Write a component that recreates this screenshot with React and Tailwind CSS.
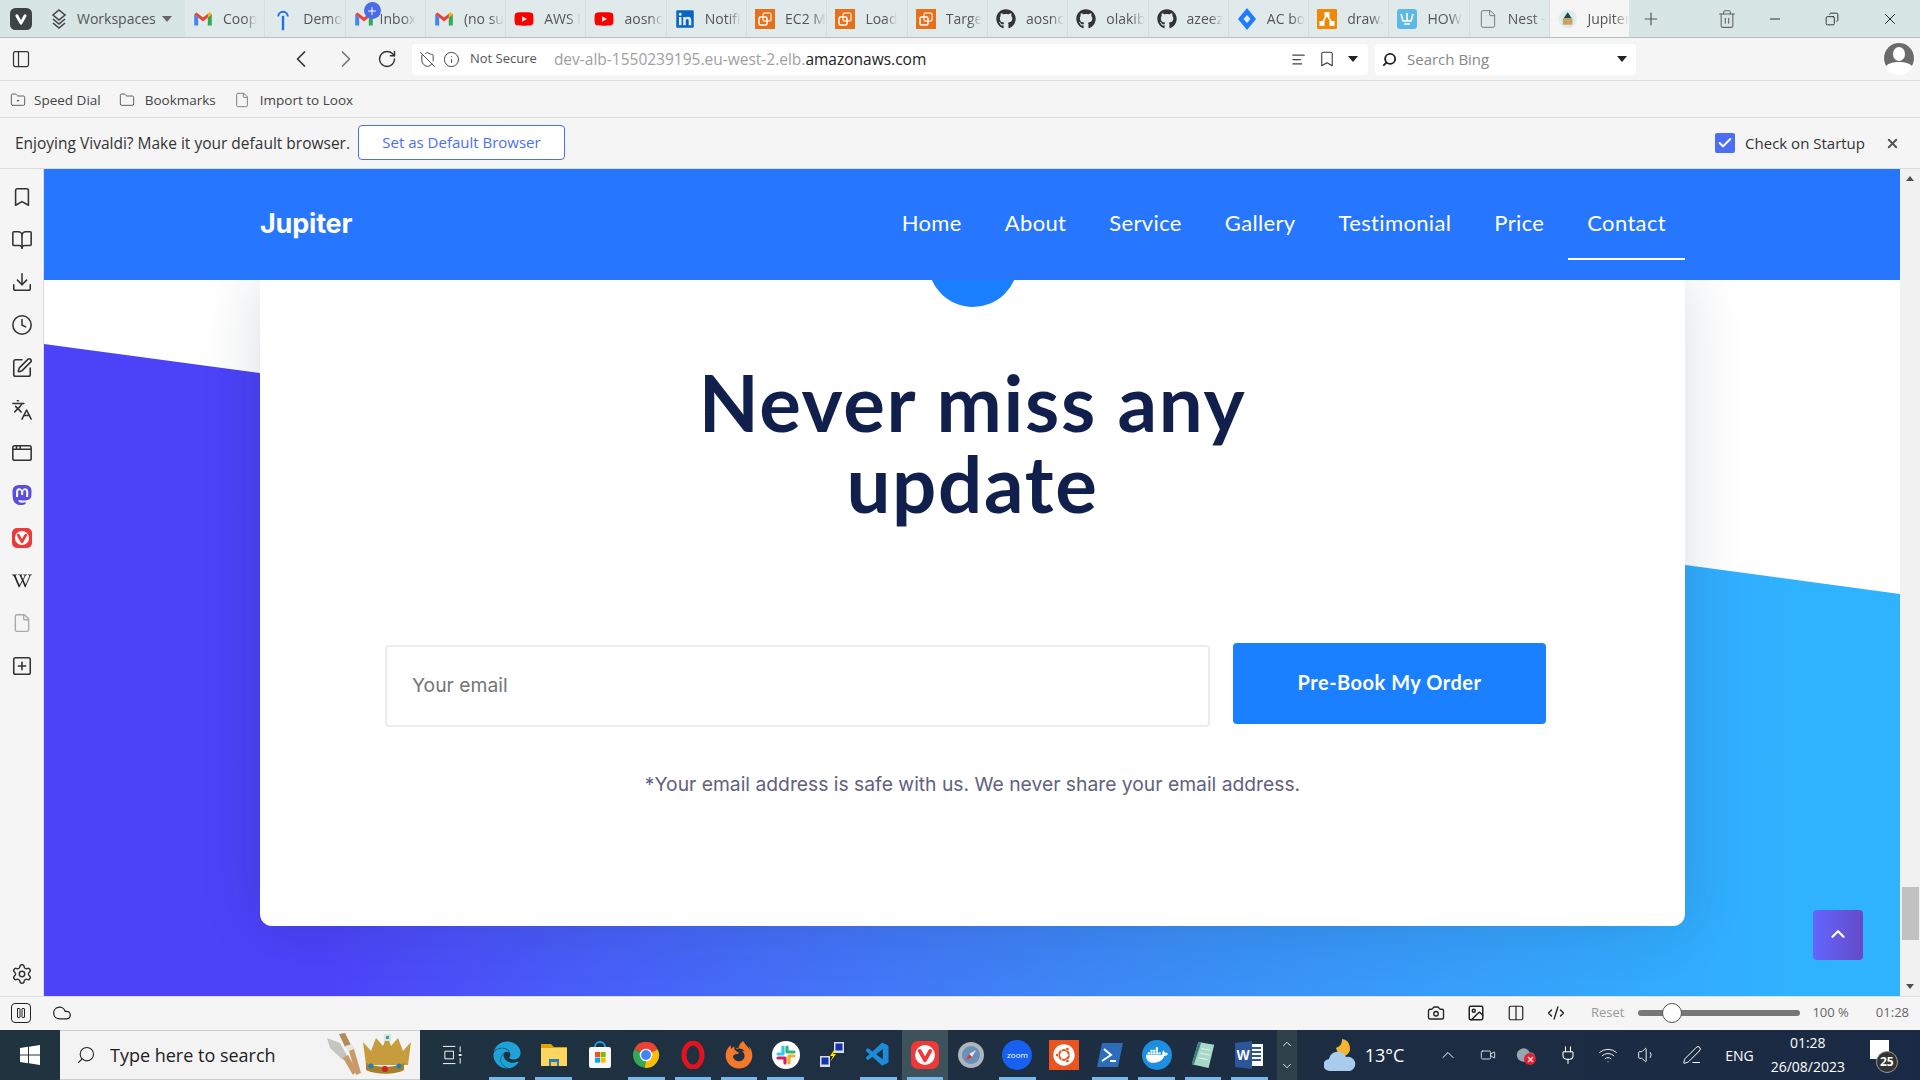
import React from 'react';
import {
  Bookmark, BookOpen, Download, Clock, SquarePen, Languages, AppWindow, File, SquarePlus, Settings,
  PanelLeft, ChevronLeft, ChevronRight, RotateCw, ShieldOff, Info, AlignLeft, Plus, Trash2, Minus, X, Copy,
  Search, FolderDot, Folder, Check, ChevronUp, ChevronDown, Pause, Cloud, Camera, Image, Columns2, Code2, Video, Wifi, Volume1, PenLine, Plug,
} from 'lucide-react';
import { FaGithub, FaLinkedin, FaYoutube, FaFirefoxBrowser, FaEdge, FaUbuntu, FaDocker, FaWikipediaW } from 'react-icons/fa';
import { SiMastodon } from 'react-icons/si';
import { VscVscode } from 'react-icons/vsc';

const Gmail = () => (
  <svg viewBox="0 0 24 20" className="w-5 h-4">
    <path d="M1 4v14h5V8z" fill="#4285f4" />
    <path d="M23 4v14h-5V8z" fill="#34a853" />
    <path d="M1 4l5 4 6 5 6-5 5-4-3-2-8 6-8-6z" fill="#ea4335" />
    <path d="M18 8l5-4-3-2-2 1.5z" fill="#fbbc04" />
  </svg>
);
const Youtube = () => <FaYoutube className="w-5 h-5 text-[#f00]" />;
const Fing = () => (
  <svg viewBox="0 0 20 30" className="w-5 h-6" fill="none" stroke="#1a73e8" strokeWidth="2.4">
    <path d="M4 12a6 6 0 1 1 12 0" />
    <path d="M10 11v18" strokeWidth="3" />
  </svg>
);
const Aws = () => (
  <svg viewBox="0 0 20 20" className="w-5 h-5">
    <rect width="20" height="20" fill="#e8701a" />
    <rect x="8" y="4" width="8" height="8" rx="1.5" fill="none" stroke="#fbd9bd" strokeWidth="1.5" />
    <rect x="4" y="8" width="8" height="8" rx="1.5" fill="none" stroke="#fff" strokeWidth="1.5" />
  </svg>
);
const Jira = () => (
  <svg viewBox="0 0 20 24" className="w-5 h-6">
    <path d="M10 1l9 11-9 11-9-11z" fill="#1f7bff" />
    <path d="M10 8l3.5 4-3.5 4-3.5-4z" fill="#e3ebeb" />
  </svg>
);
const Draw = () => (
  <svg viewBox="0 0 20 20" className="w-5 h-5">
    <rect width="20" height="20" rx="1" fill="#f08705" />
    <path d="M10 6l-5 8M10 6l5 8" stroke="#fff" strokeWidth="1.5" />
    <rect x="7.5" y="3" width="5" height="5" fill="#fff" />
    <rect x="2.5" y="12" width="5" height="5" fill="#fff" />
    <rect x="12.5" y="12" width="5" height="5" fill="#fff" />
  </svg>
);
const How = () => (
  <svg viewBox="0 0 20 20" className="w-5 h-5">
    <rect width="20" height="20" rx="3" fill="#5cb8e6" />
    <path d="M4 5l2 7h8l2-7M10 4v8M7 15h6" stroke="#fff" strokeWidth="1.6" fill="none" />
  </svg>
);
const Doc = () => <File className="w-5 h-5 text-[#777]" strokeWidth={1.2} />;
const Jup = () => (
  <svg viewBox="0 0 20 20" className="w-5 h-5">
    <circle cx="10" cy="10" r="9.5" fill="#dfecec" />
    <path d="M6 9l4-6 4 6z" fill="#17494f" />
    <rect x="5" y="9" width="10" height="7" rx="1" fill="#c9a265" />
  </svg>
);
const Gh = () => <FaGithub className="w-5 h-5 text-[#333]" />;

// vivaldi mark: rounded tile, white disc, v cut out of it
const VivaldiTile = ({ className, tile = '#ef3939', disc = '#fff', mark = '#ef3939' }) => (
  <svg viewBox="0 0 24 24" className={className}>
    <rect width="24" height="24" rx="6" fill={tile} />
    <circle cx="12" cy="12" r="8.5" fill={disc} />
    <path d="M7.500 8.500l4.500 8 4.500-8" fill="none" stroke={mark} strokeWidth="3.200" strokeLinecap="round" strokeLinejoin="round" />
  </svg>
);

const tabs = [
  [<Gmail />, 'Coop'], [<Fing />, 'Demo'], [<Gmail />, 'Inbox', true], [<Gmail />, '(no su'],
  [<Youtube />, 'AWS I'], [<Youtube />, 'aosnc'], [<FaLinkedin className="w-5 h-5 text-[#0a66c2]" />, 'Notifi'],
  [<Aws />, 'EC2 M'], [<Aws />, 'Load'], [<Aws />, 'Targe'], [<Gh />, 'aosnc'], [<Gh />, 'olakib'], [<Gh />, 'azeez'],
  [<Jira />, 'AC bo'], [<Draw />, 'draw.'], [<How />, 'HOW'], [<Doc />, 'Nest -'],
];

function TabStrip() {
  return (
    <div className="h-[38px] flex bg-[#d7e5e5] border-b border-[#b3c0c0] text-[14px] text-[#555]">
      <div className="w-[185px] flex items-center pl-[10px]">
        <VivaldiTile className="w-[22px] h-[26px]" tile="#3d4446" disc="#3d4446" mark="#fff" />
        <svg viewBox="0 0 20 22" className="w-5 h-[22px] ml-[17px]" fill="none" stroke="#444" strokeWidth="1.6">
          <path d="M10 2l6 5-6 5-6-5z" />
          <path d="M4 11l6 5 6-5M4 15l6 5 6-5" />
        </svg>
        <span className="ml-[8px] text-[14px]">Workspaces</span>
        <span className="ml-[6px] w-0 h-0 border-x-[5px] border-x-transparent border-t-[6px] border-t-[#666]" />
      </div>
      {tabs.map(([icon, label, badge], i) => (
        <div key={i} className="relative w-[80.3px] flex items-center pl-[8px] bg-[#e1eaea] border-r border-[#d3dfdf]">
          <div className="w-5 flex justify-center shrink-0">{icon}</div>
          <span className={`${badge ? 'ml-[6px]' : 'ml-[10px]'} overflow-hidden whitespace-nowrap [mask-image:linear-gradient(to_right,black_65%,transparent)]`}>{label}</span>
          {badge && (
            <span className="absolute left-[18px] top-[2px] w-[17px] h-[17px] rounded-full bg-[#4a6bea] text-white flex items-center justify-center">
              <Plus className="w-3 h-3" strokeWidth={2} />
            </span>
          )}
        </div>
      ))}
      <div className="w-[79px] flex items-center pl-[8px] bg-[#f5f5f5]">
        <Jup />
        <span className="ml-[10px] overflow-hidden whitespace-nowrap [mask-image:linear-gradient(to_right,black_65%,transparent)]">Jupiter</span>
      </div>
      <div className="flex items-center">
        <Plus className="w-5 h-5 ml-[12px] text-[#555]" strokeWidth={1.4} />
        <Trash2 className="w-5 h-5 ml-[56px] text-[#666]" strokeWidth={1.3} />
        <Minus className="w-4 h-4 ml-[30px] text-[#333]" strokeWidth={1.5} />
        <Copy className="w-[14px] h-[14px] ml-[42px] text-[#222] -scale-x-100" strokeWidth={1.5} />
        <X className="w-[18px] h-[18px] ml-[42px] text-[#222]" strokeWidth={1.3} />
      </div>
    </div>
  );
}

function AddressBar() {
  return (
    <div className="h-[43px] flex items-center bg-[#f5f5f5] border-b border-[#dcdcdc] text-[14px]">
      <PanelLeft className="w-5 h-5 ml-[11px] text-[#333]" strokeWidth={1.5} />
      <ChevronLeft className="w-7 h-7 ml-[256px] text-[#333]" strokeWidth={1.5} />
      <ChevronRight className="w-7 h-7 ml-[17px] text-[#777]" strokeWidth={1.5} />
      <RotateCw className="w-5 h-5 ml-[17px] text-[#333]" strokeWidth={1.7} />
      <div className="ml-[15px] w-[956px] h-[31px] bg-white rounded-[4px] flex items-center">
        <ShieldOff className="w-[17px] h-[17px] ml-[7px] text-[#444]" strokeWidth={1.4} />
        <Info className="w-[17px] h-[17px] ml-[7px] text-[#444]" strokeWidth={1.4} />
        <span className="ml-[10px] text-[13px] text-[#555]">Not Secure</span>
        <span className="ml-[17px] pt-[2px] text-[#a0a0a0] text-[15.5px]">dev-alb-1550239195.eu-west-2.elb.<span className="text-[#222]">amazonaws.com</span></span>
        <div className="ml-auto flex items-center">
          <AlignLeft className="w-[15px] h-[15px] text-[#444] -ml-[4px] mr-[2px]" strokeWidth={2} />
          <Bookmark className="w-[18px] h-[18px] ml-[10px] text-[#333]" strokeWidth={1.4} />
          <span className="ml-[12px] mr-[10px] w-0 h-0 border-x-[5px] border-x-transparent border-t-[6px] border-t-[#222]" />
        </div>
      </div>
      <div className="ml-[7px] w-[261px] h-[31px] bg-white rounded-[4px] flex items-center">
        <Search className="w-[15px] h-[15px] ml-[7px] text-[#222] -scale-x-100" strokeWidth={3} />
        <span className="ml-[10px] text-[15px] text-[#888]">Search Bing</span>
        <span className="ml-auto mr-[9px] w-0 h-0 border-x-[5px] border-x-transparent border-t-[6px] border-t-[#222]" />
      </div>
      <svg viewBox="0 0 32 32" className="ml-auto mr-[5px] w-8 h-8">
        <circle cx="16" cy="16" r="16" fill="#fff" />
        <path d="M16 0a15 15 0 0 1 15 15c0 3-1 6-2 8-3-3-7-4-13-4s-10 1-13 4c-1-2-2-5-2-8A15 15 0 0 1 16 0z" fill="#6b6b6b" />
        <ellipse cx="16" cy="11" rx="6" ry="7" fill="#fff" />
      </svg>
    </div>
  );
}

function BookmarksBar() {
  return (
    <div className="h-[37px] flex items-center bg-[#f5f5f5] border-b border-[#dcdcdc] text-[13.5px] text-[#444] pt-[2px]">
      <FolderDot className="w-4 h-4 ml-[10px] text-[#555]" strokeWidth={1.4} />
      <span className="ml-[8px]">Speed Dial</span>
      <Folder className="w-4 h-4 ml-[18px] text-[#555]" strokeWidth={1.4} />
      <span className="ml-[10px]">Bookmarks</span>
      <File className="w-4 h-4 ml-[18px] text-[#777]" strokeWidth={1.4} />
      <span className="ml-[10px]">Import to Loox</span>
    </div>
  );
}

function DefaultNotice() {
  return (
    <div className="h-[51px] flex items-center bg-[#f5f5f5] border-b border-[#dcdcdc] text-[15.5px] text-[#333]">
      <span className="ml-[15px] pt-[1px]">Enjoying Vivaldi? Make it your default browser.</span>
      <button className="ml-[8px] w-[207px] h-[35px] -mt-[1px] rounded-[4px] border border-[#4c6ef5] bg-white text-[15px] text-[#4c6ef5]">Set as Default Browser</button>
      <span className="ml-auto -mr-[3px] w-5 h-5 rounded-[2px] bg-[#4c6ef5] flex items-center justify-center">
        <Check className="w-4 h-4 text-white" strokeWidth={3} />
      </span>
      <span className="ml-[13px] text-[15px]">Check on Startup</span>
      <X className="w-[15px] h-[15px] ml-[20px] mr-[20px] text-[#555]" strokeWidth={3} />
    </div>
  );
}

function Sidebar() {
  const cls = 'w-[22px] h-[22px] text-[#333]';
  const items = [
    <Bookmark className={cls} strokeWidth={1.7} />,
    <BookOpen className={cls} strokeWidth={1.7} />,
    <Download className={cls} strokeWidth={1.7} />,
    <Clock className={cls} strokeWidth={1.7} />,
    <SquarePen className={cls} strokeWidth={1.7} />,
    <Languages className={cls} strokeWidth={1.7} />,
    <AppWindow className={cls} strokeWidth={1.7} />,
    <SiMastodon className="w-5 h-5 text-[#5b4de0]" />,
    <VivaldiTile className="w-5 h-5" />,
    <FaWikipediaW className="w-5 h-5 text-[#222]" />,
    <File className="w-5 h-5 text-[#aaa]" strokeWidth={1.7} />,
    <SquarePlus className={cls} strokeWidth={1.7} />,
  ];
  return (
    <div className="w-[44px] shrink-0 bg-[#f5f5f5] border-r border-[#dcdcdc] flex flex-col items-center pt-[7px] pb-[11px]">
      {items.map((it, i) => (
        <div key={i} className="h-[42.6px] flex items-center justify-center">{it}</div>
      ))}
      <Settings className="w-[22px] h-[22px] mt-auto text-[#333]" strokeWidth={1.6} />
    </div>
  );
}

const navItems = ['Home', 'About', 'Service', 'Gallery', 'Testimonial', 'Price', 'Contact'];

function SiteHeader() {
  return (
    <header className="h-[111px] shrink-0 bg-[#2776ff] flex pl-[216px] pr-[215px] justify-between font-['Lato',sans-serif]">
      <div className="pt-[39px] font-['Inter',sans-serif] font-bold text-[27px] leading-[32px] text-white tracking-[-0.2px]">Jupiter</div>
      <nav className="flex gap-[5px] text-white text-[22px] tracking-[0.35px] h-[91px]">
        {navItems.map((n) => (
          <a key={n} className={`px-[19px] pt-[38px] leading-[32px] ${n === 'Contact' ? 'border-b-2 border-white' : ''}`}>{n}</a>
        ))}
      </nav>
    </header>
  );
}

function Subscribe() {
  return (
    <section className="relative flex-1 overflow-hidden bg-white">
      <div className="absolute inset-0 bg-linear-to-r from-[#4c42f8] from-[15%] via-[#3b8cf5] via-[60%] to-[#2fb3ff] to-[95%] [clip-path:polygon(0_64px,100%_314px,100%_100%,0_100%)]" />
      <div className="relative ml-[216px] w-[1425px] h-[646px] bg-white rounded-b-[12px] shadow-[0_0_60px_rgba(20,40,70,0.16)] flex flex-col items-center">
        <div className="w-[90px] h-[90px] shrink-0 rounded-full bg-[#1a80ff] -mt-[63px]" />
        <h2 className="mt-[55px] w-[600px] text-center font-['Lato',sans-serif] font-bold text-[78px] leading-[81px] tracking-[1.7px] text-[#111f4d]">Never miss any update</h2>
        <div className="mt-[119px] self-stretch flex items-start px-[125px] gap-[23px]">
          <input
            placeholder="Your email"
            className="w-[825px] h-[82px] mt-[2px] px-[25px] pb-[2px] border-2 border-[#ececec] rounded-[4px] bg-white font-['Inter',sans-serif] text-[19.3px] placeholder:text-[#757575] outline-none"
          />
          <button className="w-[313px] h-[81px] rounded-[4px] bg-[#1a80ff] text-white font-['Lato',sans-serif] font-bold text-[20px] tracking-[0.5px] pb-[4px]">Pre-Book My Order</button>
        </div>
        <p className="mt-[43px] font-['Inter',sans-serif] text-[19.3px] leading-[28px] text-[#5f6180]">*Your email address is safe with us. We never share your email address.</p>
      </div>
      <button className="absolute left-[1769px] top-[630px] w-[50px] h-[50px] rounded-[4px] bg-linear-to-r from-[#6266ff] to-[#644ac8] flex items-center justify-center">
        <ChevronUp className="w-[22px] h-[22px] text-white -mt-[3px]" strokeWidth={2.5} />
      </button>
    </section>
  );
}

function Scrollbar() {
  return (
    <div className="w-5 shrink-0 bg-[#f1f1f1] flex flex-col items-center relative">
      <span className="mt-[7px] w-0 h-0 border-x-[4px] border-x-transparent border-b-[5px] border-b-[#505050]" />
      <div className="mt-auto mb-[44px] w-[17px] h-[53px] bg-[#c1c1c1]" />
      <span className="mb-[7px] w-0 h-0 border-x-[4px] border-x-transparent border-t-[5px] border-t-[#505050]" />
    </div>
  );
}

function StatusBar() {
  const cls = 'w-[18px] h-[18px] text-[#222]';
  return (
    <div className="h-[34px] flex items-center bg-[#f5f5f5] border-t border-[#e0e0e0] pb-[2px] text-[13px] text-[#666]">
      <Pause className="w-5 h-5 ml-[11px] text-[#222] border border-[#222] rounded-[4px] p-[3px]" strokeWidth={2} />
      <Cloud className="w-5 h-5 ml-[21px] text-[#222]" strokeWidth={1.5} />
      <Camera className={`${cls} ml-auto`} strokeWidth={1.8} />
      <Image className={`${cls} ml-[22px]`} strokeWidth={2} />
      <Columns2 className={`${cls} ml-[22px]`} strokeWidth={1.6} />
      <Code2 className={`${cls} ml-[22px]`} strokeWidth={1.8} />
      <span className="ml-[26px] text-[#999]">Reset</span>
      <div className="relative ml-[14px] w-[162px] h-[6px] rounded-full bg-[#777]">
        <span className="absolute left-[24px] -top-[7px] w-5 h-5 rounded-full bg-white border border-[#555]" />
      </div>
      <span className="ml-[12px]">100 %</span>
      <span className="ml-[27px] mr-[11px]">01:28</span>
    </div>
  );
}

const Chrome = () => (
  <svg viewBox="0 0 24 24" className="w-7 h-7">
    <path d="M12 12L2 7a11 11 0 0 1 20 0z" fill="#ea4335" />
    <path d="M12 12l10-5a11 11 0 0 1-11 16z" fill="#fbbc04" />
    <path d="M12 12l-1 11A11 11 0 0 1 2 7z" fill="#34a853" />
    <circle cx="12" cy="12" r="5.4" fill="#fff" />
    <circle cx="12" cy="12" r="4.2" fill="#4285f4" />
  </svg>
);
const Files = () => (
  <svg viewBox="0 0 26 28" className="w-7 h-7">
    <path d="M0 3h10l3 3h13v6H0z" fill="#e0a106" />
    <rect y="7" width="26" height="18" fill="#fdd65d" />
    <path d="M8 25v-7h10v7z" fill="#2a78c7" />
    <rect x="10" y="21" width="6" height="4" fill="#f8c93e" />
  </svg>
);
const Store = () => (
  <svg viewBox="0 0 24 28" className="w-7 h-7">
    <path d="M7 6a5 5 0 0 1 10 0" fill="none" stroke="#1da5e8" strokeWidth="1.8" />
    <rect x="1" y="6" width="22" height="21" rx="2" fill="#f7f7f7" />
    <rect x="7" y="11" width="5" height="5" fill="#f25022" />
    <rect x="12.6" y="11" width="5" height="5" fill="#7fba00" />
    <rect x="7" y="16.6" width="5" height="5" fill="#00a4ef" />
    <rect x="12.6" y="16.6" width="5" height="5" fill="#ffb900" />
  </svg>
);
const Opera = () => (
  <svg viewBox="0 0 24 28" className="w-7 h-7">
    <ellipse cx="12" cy="14" rx="9" ry="12" fill="none" stroke="#e0141f" strokeWidth="5" />
  </svg>
);
const Slack = () => (
  <svg viewBox="0 0 28 28" className="w-7 h-7">
    <circle cx="14" cy="14" r="14" fill="#fff" />
    <g strokeWidth="3.2" strokeLinecap="round">
      <path d="M11 6v7M11 13H6" stroke="#36c5f0" />
      <path d="M22 11h-7M15 11V6" stroke="#2eb67d" />
      <path d="M17 22v-7M17 15h5" stroke="#ecb22e" />
      <path d="M6 17h7M13 17v5" stroke="#e01e5a" />
    </g>
  </svg>
);
const Network = () => (
  <svg viewBox="0 0 28 28" className="w-7 h-7">
    <rect x="16" y="1" width="10" height="11" fill="#ddd" />
    <rect x="17.5" y="2.5" width="7" height="7" fill="#1431b8" />
    <rect x="2" y="15" width="10" height="11" fill="#ddd" />
    <rect x="3.5" y="16.5" width="7" height="7" fill="#1431b8" />
    <path d="M16 9l-4 6h3l-3 6 6-8h-3l3-4z" fill="#ffe100" />
  </svg>
);
const Compass = () => (
  <svg viewBox="0 0 28 28" className="w-7 h-7">
    <circle cx="14" cy="14" r="13" fill="#aeb6bd" />
    <circle cx="14" cy="14" r="9" fill="#6a8fb8" />
    <path d="M19 9l-7 4 3 3z" fill="#e8e8e8" />
    <path d="M9 19l3-6 3 3z" fill="#d33" />
  </svg>
);
const Zoom = () => (
  <span className="w-[30px] h-[30px] rounded-full bg-[#1760f0] flex items-center justify-center text-white text-[8px]">zoom</span>
);
const Ubuntu = () => (
  <span className="w-[30px] h-[30px] bg-[#e95420] flex items-center justify-center"><FaUbuntu className="w-[22px] h-[22px] text-white" /></span>
);
const Power = () => (
  <svg viewBox="0 0 28 28" className="w-7 h-7">
    <path d="M6 2h21l-5 24H1z" fill="#2c6cb8" />
    <path d="M8 8l7 6-9 6M14 20h6" stroke="#fff" strokeWidth="2" fill="none" />
  </svg>
);
const Docker = () => (
  <span className="w-[30px] h-[30px] rounded-full bg-[#1d8fe1] flex items-center justify-center"><FaDocker className="w-[22px] h-[22px] text-white" /></span>
);
const Notepad = () => (
  <svg viewBox="0 0 28 30" className="w-7 h-7">
    <path d="M9 1l17 3-6 25-18-4z" fill="#a8d8c8" />
    <path d="M9 1l3 1-8 24-2-1z" fill="#3f7f80" />
    <path d="M12 8l10 2M11 13l10 2M9 18l10 2" stroke="#e8f5f0" strokeWidth="1" />
  </svg>
);
const Word = () => (
  <svg viewBox="0 0 28 28" className="w-7 h-7">
    <rect x="14" y="3" width="14" height="22" fill="#fff" />
    <path d="M16 7h10M16 11h10M16 15h10M16 19h10" stroke="#2b579a" strokeWidth="2" />
    <path d="M0 2l17-2v28L0 26z" fill="#2b579a" />
    <text x="8" y="19" textAnchor="middle" fontSize="14" fontWeight="700" fill="#fff" fontFamily="Liberation Sans, sans-serif">W</text>
  </svg>
);

const taskIcons = [
  [<FaEdge className="w-7 h-7 text-[#1fa2d8]" />, true], [<Files />, true], [<Store />], [<Chrome />, true], [<Opera />, true],
  [<FaFirefoxBrowser className="w-7 h-7 text-[#f3782a]" />, true], [<Slack />, true], [<Network />], [<VscVscode className="w-7 h-7 text-[#1c8cd8]" />, true],
  [<VivaldiTile className="w-7 h-7" />, true, true], [<Compass />], [<Zoom />, true], [<Ubuntu />], [<Power />, true], [<Docker />, true], [<Notepad />, true], [<Word />, true],
];

function Taskbar() {
  return (
    <div className="h-[50px] flex items-center bg-linear-to-r from-[#20343f] to-[#1b2a44] text-white">
      <div className="w-[60px] flex justify-center">
        <svg viewBox="0 0 20 20" className="w-5 h-5" fill="#fff">
          <path d="M0 3l8-1.2V9.500H0zM9 1.700L20 0v9.500H9zM0 10.500h8v7.700L0 17zM9 10.500h11V20L9 18.300z" />
        </svg>
      </div>
      <div className="w-[360px] h-full bg-[#f3f3f3] border-y border-[#ccc] flex items-center text-[#222]">
        <Search className="w-5 h-5 ml-[16px] -scale-x-100" strokeWidth={1.3} />
        <span className="ml-[14px] text-[18px] font-['Open_Sans',sans-serif]">Type here to search</span>
        <svg viewBox="0 0 92 44" className="w-[92px] h-[44px] ml-auto mr-[2px]">
          <path d="M1 5l13 5 8 14-5 3-13-12z" fill="#c4c4c0" />
          <path d="M17 25l5-3 9 16-4 4z" fill="#c89a66" />
          <path d="M13 1l6-1 6 12-6 2z" fill="#b58a5a" />
          <path d="M19 13l7-2 3 5-6 3z" fill="#e8e4d8" />
          <path d="M23 18l5-2 7 24-5 2z" fill="#c89a66" />
          <path d="M40 32l-3-23 8 9 5-13 7 8 4-11 4 11 7-8 5 13 8-9-3 23z" fill="#c69c3c" />
          <path d="M40 30c10 5 29 5 38 0v7c-9 5-28 5-38 0z" fill="#a87e2a" />
          <circle cx="59" cy="36" r="3" fill="#c22" />
          <circle cx="45" cy="33" r="2.500" fill="#1a80c0" />
          <circle cx="73" cy="33" r="2.500" fill="#1a80c0" />
          <rect x="58" y="1" width="7" height="7" fill="#dfe3e0" />
          <rect x="60" y="3" width="3" height="3" fill="#2aa" />
        </svg>
      </div>
      <div className="w-[64px] flex justify-center">
        <svg viewBox="0 0 22 20" className="w-[21px] h-5" fill="none" stroke="#fff" strokeWidth="1">
          <path d="M1 1h13M1 19h13M3 6h9v8H3zM19 1v6M19 13v6" />
          <rect x="17.500" y="9" width="3" height="2" fill="#fff" stroke="none" />
        </svg>
      </div>
      <div className="flex h-full">
        {taskIcons.map(([icon, running, active], i) => (
          <div key={i} className={`relative w-[46.4px] flex items-center justify-center ${active ? 'bg-[#3e525c]' : ''}`}>
            {icon}
            {running && <span className="absolute bottom-0 left-[5px] right-[5px] h-[3px] bg-[#76b9ed]" />}
          </div>
        ))}
      </div>
      <div className="w-[20px] h-full ml-[4px] bg-[#2e4048] flex flex-col items-center justify-center gap-[8px]">
        <ChevronUp className="w-[14px] h-[14px]" strokeWidth={1.5} />
        <ChevronDown className="w-[14px] h-[14px]" strokeWidth={1.5} />
      </div>
      <svg viewBox="0 0 34 36" className="w-[34px] h-[36px] ml-[27px]">
        <path d="M18 2a9 9 0 0 1 3 17 10 10 0 0 1-9-8 9 9 0 0 0 6-9z" fill="#f5b52e" />
        <path d="M6 34a6 6 0 0 1-1-12 9 9 0 0 1 17-2 7 7 0 0 1 4 14z" fill="#a9cbee" />
      </svg>
      <span className="ml-[7px] text-[18px] font-['Open_Sans',sans-serif]">13°C</span>
      <ChevronUp className="w-5 h-5 ml-[34px]" strokeWidth={1.2} />
      <Video className="w-4 h-5 ml-[22px]" strokeWidth={1.2} />
      <span className="relative ml-[20px]">
        <Cloud className="w-5 h-5 text-[#9aa6ad]" fill="#9aa6ad" />
        <span className="absolute left-[8px] top-[8px] w-[12px] h-[12px] rounded-full bg-[#e02030] flex items-center justify-center"><X className="w-[9px] h-[9px]" strokeWidth={3} /></span>
      </span>
      <Plug className="w-5 h-5 ml-[22px]" strokeWidth={1.3} />
      <Wifi className="w-5 h-5 ml-[20px]" strokeWidth={1.1} />
      <Volume1 className="w-5 h-5 ml-[19px]" strokeWidth={1.1} />
      <PenLine className="w-5 h-5 ml-[25px]" strokeWidth={1.2} />
      <span className="ml-[23px] text-[14px] font-['Open_Sans',sans-serif]">ENG</span>
      <div className="ml-[16px] w-[76px] text-center text-[14px] leading-[24px] font-['Open_Sans',sans-serif]">
        <div>01:28</div>
        <div className="whitespace-nowrap -mx-[2px]">26/08/2023</div>
      </div>
      <div className="relative ml-[24px] w-[24px] h-[30px]">
        <div className="w-[19px] h-[19px] bg-white" />
        <span className="absolute left-[6px] top-[11px] w-[22px] h-[22px] rounded-full bg-[#333] border border-[#999] text-[12px] font-bold flex items-center justify-center">25</span>
      </div>
    </div>
  );
}

export default function App() {
  return (
    <div className="w-[1920px] h-[1080px] flex flex-col overflow-hidden font-['Open_Sans',sans-serif] bg-white">
      <TabStrip />
      <AddressBar />
      <BookmarksBar />
      <DefaultNotice />
      <div className="flex-1 flex min-h-0">
        <Sidebar />
        <main className="flex-1 min-w-0 flex flex-col">
          <SiteHeader />
          <Subscribe />
        </main>
        <Scrollbar />
      </div>
      <StatusBar />
      <Taskbar />
    </div>
  );
}
